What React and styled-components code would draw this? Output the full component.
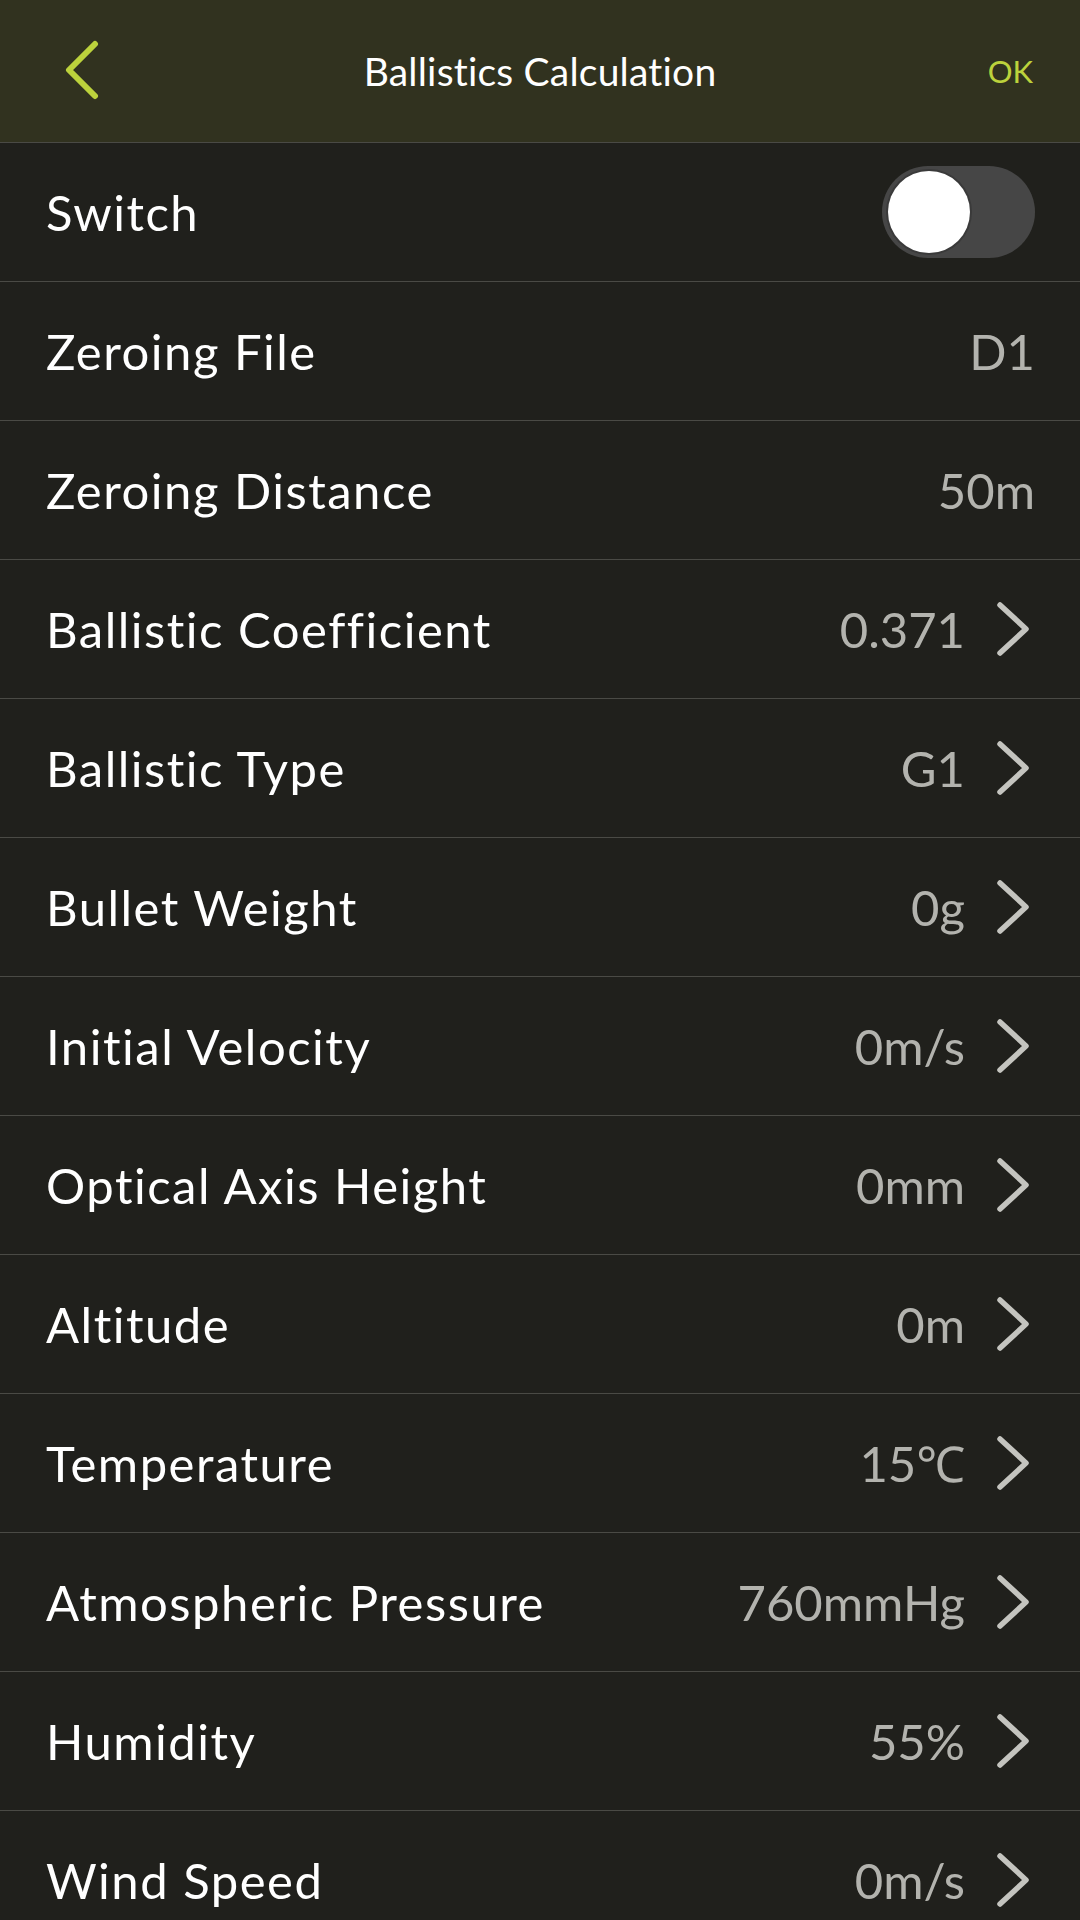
import React from "react";
import styled, { createGlobalStyle } from "styled-components";

const Colors = {
  header: "#31321f",
  bg: "#20201c",
  line: "#4a4a45",
  accent: "#bcd23c",
  white: "#ffffff",
  value: "#b3b3ae",
  chevron: "#c4c4bf",
};

const GlobalStyle = createGlobalStyle`
  html, body {
    margin: 0;
    padding: 0;
    background: ${Colors.bg};
    overflow: hidden;
  }
  * { box-sizing: border-box; }
`;

const Page = styled.div`
  width: 1080px;
  min-height: 1920px;
  background: ${Colors.bg};
  font-family: Lato, "Noto Sans", sans-serif;
`;

const TopBar = styled.header`
  height: 143px;
  background: ${Colors.header};
  border-bottom: 1px solid ${Colors.line};
  display: grid;
  grid-template-columns: 200px 1fr 200px;
  align-items: center;
`;

const BackButton = styled.button`
  justify-self: start;
  margin-left: 62px;
  background: none;
  border: none;
  padding: 0;
  display: flex;
  cursor: pointer;
`;

const Title = styled.h1`
  margin: 0;
  text-align: center;
  color: ${Colors.white};
  font-size: 39px;
  font-weight: 400;
  letter-spacing: 0.2px;
`;

const OkButton = styled.button`
  justify-self: end;
  margin-right: 47px;
  background: none;
  border: none;
  padding: 0;
  color: ${Colors.accent};
  font-family: inherit;
  font-size: 31px;
  cursor: pointer;
`;

const List = styled.div`
  display: flex;
  flex-direction: column;
`;

const Row = styled.div`
  height: 139px;
  border-bottom: 1px solid ${Colors.line};
  padding: 0 45px 0 46px;
  display: flex;
  align-items: center;
  justify-content: space-between;
`;

const Label = styled.span`
  color: ${Colors.white};
  font-size: 49px;
  font-weight: 400;
  letter-spacing: 1.5px;
`;

const Right = styled.div`
  display: flex;
  align-items: center;
`;

const Value = styled.span`
  color: ${Colors.value};
  font-size: 49px;
`;

const ChevronBox = styled.span`
  display: flex;
  margin-left: 30px;
`;

const Toggle = styled.div`
  width: 153px;
  height: 92px;
  border-radius: 46px;
  background: #464646;
  padding: 6px;
  display: flex;
  align-items: center;
  justify-content: ${(p) => (p.$on ? "flex-end" : "flex-start")};
`;

const Knob = styled.span`
  width: 82px;
  height: 82px;
  border-radius: 50%;
  background: ${Colors.white};
  box-shadow: 0 0 0 2px #3a3a3a;
`;

const BackIcon = () => (
  <svg width="38" height="62" viewBox="0 0 38 62">
    <path
      d="M33 4 L7 30 L33 56"
      fill="none"
      stroke={Colors.accent}
      strokeWidth="6"
      strokeLinecap="round"
      strokeLinejoin="round"
    />
  </svg>
);

const Chevron = () => (
  <ChevronBox>
    <svg width="40" height="58" viewBox="0 0 40 58">
      <path
        d="M5 5 L31 29 L5 53"
        fill="none"
        stroke={Colors.chevron}
        strokeWidth="5.5"
        strokeLinecap="round"
        strokeLinejoin="round"
      />
    </svg>
  </ChevronBox>
);

const rows = [
  { label: "Zeroing File", value: "D1" },
  { label: "Zeroing Distance", value: "50m" },
  { label: "Ballistic Coefficient", value: "0.371", link: true },
  { label: "Ballistic Type", value: "G1", link: true },
  { label: "Bullet Weight", value: "0g", link: true },
  { label: "Initial Velocity", value: "0m/s", link: true },
  { label: "Optical Axis Height", value: "0mm", link: true },
  { label: "Altitude", value: "0m", link: true },
  { label: "Temperature", value: "15℃", link: true },
  { label: "Atmospheric Pressure", value: "760mmHg", link: true },
  { label: "Humidity", value: "55%", link: true },
  { label: "Wind Speed", value: "0m/s", link: true },
  { label: "Wind Direction", value: "0°", link: true },
];

export default function App() {
  return (
    <Page>
      <GlobalStyle />
      <TopBar>
        <BackButton>
          <BackIcon />
        </BackButton>
        <Title>Ballistics Calculation</Title>
        <OkButton>OK</OkButton>
      </TopBar>
      <List>
        <Row>
          <Label>Switch</Label>
          <Toggle $on={false}>
            <Knob />
          </Toggle>
        </Row>
        {rows.map((r) => (
          <Row key={r.label}>
            <Label>{r.label}</Label>
            <Right>
              <Value>{r.value}</Value>
              {r.link && <Chevron />}
            </Right>
          </Row>
        ))}
      </List>
    </Page>
  );
}
